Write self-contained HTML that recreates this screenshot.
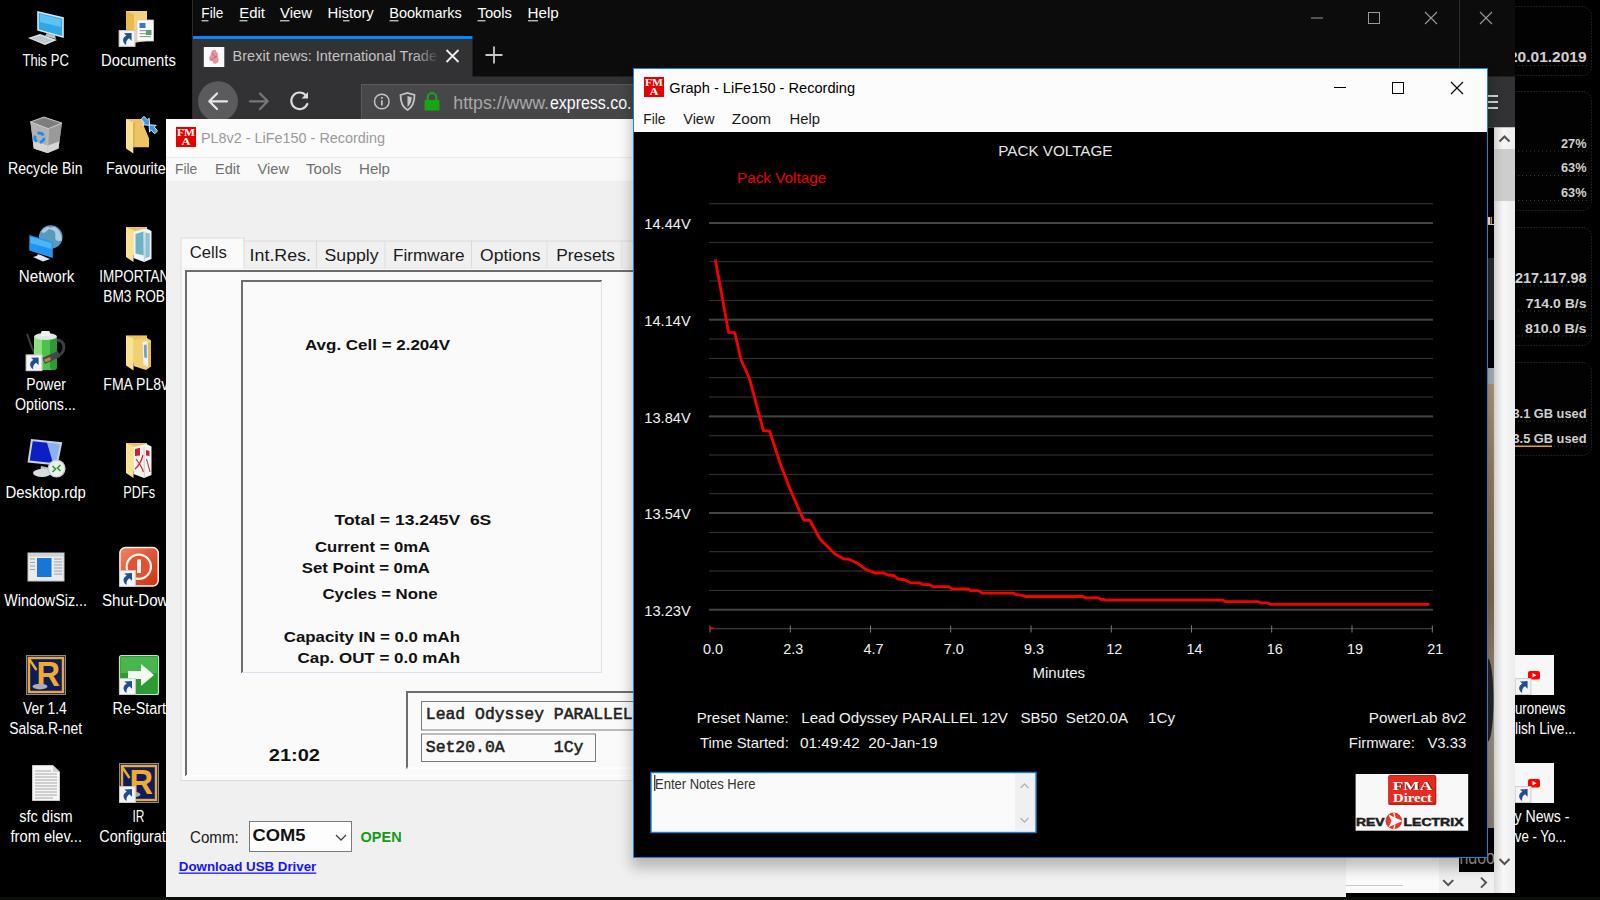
<!DOCTYPE html>
<html lang="en"><head><meta charset="utf-8"><title>Desktop - Graph - LiFe150 - Recording</title>
<style>
html,body{margin:0;padding:0;background:#000;overflow:hidden}
#screen{position:relative;width:1600px;height:900px;overflow:hidden;background:#000;font-family:"Liberation Sans",sans-serif}
svg text{white-space:pre}
</style></head><body><div id="screen">
<div id="desktop" style="position:absolute;left:0;top:0;width:1600px;height:900px;background:#000">
<svg width="1600" height="900" viewBox="0 0 1600 900" style="position:absolute;left:0;top:0;overflow:hidden" >
<g id="desktop-icons">
<g id="ico-thispc"><path d="M38 12 L63 18 L63 37 L38 30 Z" fill="#2fa8ea"/><path d="M38 12 L63 18 L63 37 L38 30 Z" fill="none" stroke="#d8e6f0" stroke-width="1.6"/><path d="M40 14 L61 19.5 L61 27 L40 22 Z" fill="#5cc4f5"/><path d="M47 33 L55 35 L56 39 L45 36 Z" fill="#b9c2c9"/><path d="M28 38 L40 34 L57 40 L45 45 Z" fill="#dfe4e8"/><path d="M30.5 38.3 L40.3 35.4 L53.5 40.2 L45 43.4 Z" fill="#c9cfd4"/><path d="M33 38.6 L41 36.3 M36 40 L44 37.5 M39.5 41.3 L47.5 38.8 M43 42.5 L51 40" stroke="#9aa2a9" stroke-width="0.8" stroke-dasharray="1.2 1"/></g>
<g id="ico-docs"><path d="M126 11 L147 11 L147 41 L126 44 Z" fill="#f3d27c"/><path d="M126 11 L134 14.5 L134 47 L126 43 Z" fill="#e9b84f"/><rect x="137" y="20" width="16.5" height="21" fill="#fdfdfd" stroke="#c9ced3" stroke-width="0.8"/><rect x="139.5" y="23" width="6" height="5" fill="#3b78c9"/><rect x="139.5" y="30" width="11.5" height="1.2" fill="#9aa3ab"/><rect x="139.5" y="33" width="11.5" height="1.2" fill="#9aa3ab"/><rect x="146" y="30" width="5.5" height="5" fill="#5da364"/><rect x="139.5" y="36" width="11.5" height="1.2" fill="#9aa3ab"/><g transform="translate(118.8,30.2) scale(1.03125)"><rect x="0" y="0" width="16" height="16" fill="#f4f4f4"/><rect x="0.4" y="0.4" width="15.2" height="15.2" fill="none" stroke="#c4c4c4" stroke-width="0.8"/><path d="M5 3 L12.4 2.7 L12.4 10.2 L9.9 7.8 C7.7 9.1 6.8 11.4 7.1 14.3 C3.2 11.6 3.2 7.1 7.4 5.3 Z" fill="#1e4f94"/></g></g>
<g id="ico-bin"><path d="M30.4 121.9 L43.9 117.1 L61.9 123.1 L58.5 148.4 L47.5 152.9 L33.8 148.4 Z" fill="#a4a4a4"/><path d="M30.4 121.9 L43.9 117.1 L61.9 123.1 L48.4 128.7 Z" fill="#7e7e7e"/><path d="M30.4 121.9 L48.4 128.7 L47.5 152.9 L33.8 148.4 Z" fill="#b2b2b2"/><path d="M48.4 128.7 L61.9 123.1 L58.5 148.4 L47.5 152.9 Z" fill="#9a9a9a"/><path d="M32.8 141 L47.8 145.5 L59.3 141.5 L58.5 148.4 L47.5 152.9 L33.8 148.4 Z" fill="#d6d6d6"/><path d="M30.4 121.9 L43.9 117.1 L61.9 123.1 L48.4 128.7 Z" fill="none" stroke="#d2d2d2" stroke-width="0.9"/><path d="M48.4 128.7 L47.5 152.9" stroke="#c6c6c6" stroke-width="0.8"/><circle cx="39.4" cy="137.7" r="4.6" fill="none" stroke="#1e8cf0" stroke-width="3" stroke-dasharray="6.6 3"/></g>
<g id="ico-fav"><path d="M126 119.1 L144 119.1 L144 126.4 L149 138.2 L149 147.3 L133.3 147.3 Z" fill="#ecc464"/><path d="M126 119.1 L133.3 122.5 L133.3 153.4 L126 148.4 Z" fill="#f9e195"/><path d="M133.3 122.5 L134.6 122.5 L134.6 147.3 L133.3 147.3 Z" fill="#d9a845"/><g stroke="#f4f8fc" stroke-width="0.9" fill="#3a96e8"><path d="M141.2 119.2 L144 116.3 L147.4 119.9 L149.2 118.2 L149.6 125.3 L142.6 124.8 L144.4 123 Z"/><path d="M157.5 130.9 L154.7 133.8 L151.3 130.2 L149.5 131.9 L149.1 124.8 L156.1 125.3 L154.3 127.1 Z"/></g></g>
<g id="ico-net"><circle cx="50.7" cy="237" r="11.8" fill="#5a98bd"/><path d="M46 228 C49 230 52 229 54 231 C57 234 54 237 56 240 C58 242 60 240 62 241 C62 236 60 230 55 227 Z" fill="#a9cfe0"/><path d="M41 232 C43 229 46 227 49 226.5 L48 230 L44 233 Z" fill="#a9cfe0"/><path d="M29.3 235 L52.8 242 L52.8 258 L29.3 250.5 Z" fill="#2196f0"/><path d="M30.5 236.8 L51.6 243 L51.6 249 L30.5 243 Z" fill="#4db4f8"/><path d="M38 254 L45 257 L46 260 L36 257 Z" fill="#c3cad0"/><path d="M33 257 L40 255 L50 259 L43 261.5 Z" fill="#e3e7ea"/></g>
<g id="ico-imp"><path d="M126 227 L147 227 L147 255 L126 255 Z" fill="#eec35f"/><path d="M126 227.5 L133.5 230 L133.5 262 L126 257 Z" fill="#f9e195"/><path d="M133.5 231.5 L146.5 228.5 L151.5 231 L151.5 259 L144 262 L133.5 258 Z" fill="#f1f4f6"/><path d="M135.5 234 L143.5 231.6 L143.8 255.5 L135.5 253.5 Z" fill="#6fb2c6"/><path d="M145.3 232.5 L149.8 233.6 L149.8 256.5 L145.3 258.5 Z" fill="#8cc3d2"/><path d="M144 231.5 L144.4 262" stroke="#c5cdd3" stroke-width="1"/></g>
<g id="ico-power"><path d="M27 334 C30 340 31 352 40 360" fill="none" stroke="#3a3d42" stroke-width="2"/><rect x="34" y="336" width="23" height="34" rx="4" fill="#4cc24a"/><rect x="34" y="336" width="8" height="34" rx="3" fill="#8be07f"/><rect x="50" y="336" width="7" height="34" rx="3" fill="#2f9a35"/><ellipse cx="45.5" cy="336.5" rx="11.5" ry="3.6" fill="#dfe7e2"/><rect x="41" y="331" width="9" height="5" rx="1.5" fill="#eef2ef"/><path d="M57 340 C66 341 66 352 58 356" fill="none" stroke="#3a3d42" stroke-width="3"/><path d="M42 358 L58 351 L60 357 L45 364 Z" fill="#44484e"/><path d="M44 359.5 L50 357 L51 360 L45.3 362.5 Z" fill="#b08a3e"/><g transform="translate(25.8,354.6) scale(1.03125)"><rect x="0" y="0" width="16" height="16" fill="#f4f4f4"/><rect x="0.4" y="0.4" width="15.2" height="15.2" fill="none" stroke="#c4c4c4" stroke-width="0.8"/><path d="M5 3 L12.4 2.7 L12.4 10.2 L9.9 7.8 C7.7 9.1 6.8 11.4 7.1 14.3 C3.2 11.6 3.2 7.1 7.4 5.3 Z" fill="#1e4f94"/></g></g>
<g id="ico-fma"><path d="M126 335.4 L147 335.4 L147 363.4 L126 363.4 Z" fill="#eec35f"/><path d="M126 335.9 L133.5 338.4 L133.5 370.4 L126 365.4 Z" fill="#f9e195"/><path d="M133.5 340 L147 338 L151 340.5 L151 366.5 L146 370 L133.5 366 Z" fill="#f3cf72"/><path d="M142.5 342 L147.3 341 L148.3 367 L143.5 364.5 Z" fill="#eef3f7"/><path d="M143.8 345 L146.6 344.6 L147 358 L144.2 357.5 Z" fill="#6aa3d8"/><path d="M148.3 343 L151 342 L151 366.5 L148.3 367 Z" fill="#e9b84f"/></g>
<g id="ico-rdp"><path d="M31 439 L62.3 442.3 L57.5 465.5 L27.5 462.5 Z" fill="#c9d0d8"/><path d="M32.8 441.2 L60 444 L56 463.3 L29.8 460.6 Z" fill="#8fb0ee"/><path d="M32.8 441.2 L47 442.7 L53 463 L29.8 460.6 Z" fill="#0c1fc4"/><path d="M41 466 L50 468 L51 473 L40 472 Z" fill="#b8c0c6"/><ellipse cx="42" cy="473" rx="9" ry="4" fill="#d9dde0"/><circle cx="56.6" cy="468.6" r="9" fill="#c9ced2"/><circle cx="56.6" cy="468.6" r="7.6" fill="#eceeec"/><path d="M52.5 466 L55.5 469 L52.5 472 M60.5 465 L57.5 468 L60.5 471" fill="none" stroke="#2f9e3b" stroke-width="1.7"/></g>
<g id="ico-pdf"><path d="M126 443 L147 443 L147 471 L126 471 Z" fill="#eec35f"/><path d="M126 443.5 L133.5 446 L133.5 478 L126 473 Z" fill="#f9e195"/><path d="M133.5 447 L146.5 444 L151.5 446.5 L151.5 475 L144 478 L133.5 474 Z" fill="#f4f4f4"/><path d="M135 449 L140 447.8 L140 455.5 L135 456 Z" fill="#c8242b"/><path d="M136 459 C139 463 142 467 143.5 472 M143 455 C141.5 461 138.5 466 135 469" stroke="#c8242b" stroke-width="1.2" fill="none"/><path d="M144 447 L144.4 478" stroke="#cfcfcf" stroke-width="1"/><path d="M146 450 L149.5 451 L149.5 456 L146 455.5 Z" fill="#c8242b"/><path d="M146.5 459 C148 464 149 468 150 472" stroke="#c8242b" stroke-width="1" fill="none"/></g>
<g id="ico-winsize"><rect x="28" y="553" width="36" height="28" fill="#e9ebed" stroke="#c2c6ca" stroke-width="1"/><rect x="28" y="553" width="36" height="3.5" fill="#cfd3d7"/><rect x="37" y="558" width="14.5" height="19" fill="#1976d9"/><path d="M30 559 h5 M30 562.5 h5 M30 566 h5 M30 569.5 h5 M54 559 h8 M54 562 h8 M54 565 h8 M54 568 h8 M54 571 h8 M54 574 h8" stroke="#9aa1a8" stroke-width="1"/></g>
<defs><linearGradient id="shutg" x1="0" x2="1" y1="0" y2="1"><stop offset="0" stop-color="#f0876a"/><stop offset="0.45" stop-color="#e2583a"/><stop offset="1" stop-color="#c4330f"/></linearGradient></defs>
<g id="ico-shut"><rect x="119.9" y="547.6" width="38.3" height="38.5" rx="5.5" fill="url(#shutg)" stroke="#fbf3f0" stroke-width="1.5"/><circle cx="138.8" cy="566.7" r="12.1" fill="#df5333" stroke="#fdf6f3" stroke-width="2.2"/><rect x="137.1" y="559.5" width="3.9" height="13.5" fill="#fdf6f3"/><g transform="translate(119.2,570.3) scale(1.03125)"><rect x="0" y="0" width="16" height="16" fill="#f4f4f4"/><rect x="0.4" y="0.4" width="15.2" height="15.2" fill="none" stroke="#c4c4c4" stroke-width="0.8"/><path d="M5 3 L12.4 2.7 L12.4 10.2 L9.9 7.8 C7.7 9.1 6.8 11.4 7.1 14.3 C3.2 11.6 3.2 7.1 7.4 5.3 Z" fill="#1e4f94"/></g></g>
<g id="ico-salsa" transform="translate(26,655)"><rect x="0.5" y="0.5" width="39" height="39" fill="#0f1c5c" stroke="#8d8a78" stroke-width="1"/><rect x="3" y="3" width="34" height="34" fill="none" stroke="#e9a93a" stroke-width="2.4"/><text x="10.5" y="31.2" font-family="'Liberation Sans', sans-serif" font-size="34.5" font-weight="bold" fill="#f0ac30" textLength="23.5" lengthAdjust="spacingAndGlyphs">R</text><path d="M2.5 3 L10.5 15" fill="none" stroke="#f0ac30" stroke-width="2.4"/><ellipse cx="14" cy="31.6" rx="7.5" ry="2.8" fill="#a9adb8"/></g>
<g id="ico-restart"><rect x="119.5" y="655.5" width="39" height="39" rx="2" fill="#2f9a35" stroke="#bfe3c0" stroke-width="1.2"/><rect x="121" y="657" width="36" height="16" fill="#49b64d"/><path d="M128 671 L141 671 L141 664 L154 675 L141 686 L141 679 L128 679 Z" fill="#f3faf3"/><g transform="translate(119.2,678.3) scale(1.03125)"><rect x="0" y="0" width="16" height="16" fill="#f4f4f4"/><rect x="0.4" y="0.4" width="15.2" height="15.2" fill="none" stroke="#c4c4c4" stroke-width="0.8"/><path d="M5 3 L12.4 2.7 L12.4 10.2 L9.9 7.8 C7.7 9.1 6.8 11.4 7.1 14.3 C3.2 11.6 3.2 7.1 7.4 5.3 Z" fill="#1e4f94"/></g></g>
<g id="ico-txt"><path d="M32.5 765.5 L53 765.5 L59.5 772 L59.5 800.5 L32.5 800.5 Z" fill="#f6f6f6" stroke="#c9c9c9" stroke-width="1"/><path d="M53 765.5 L53 772 L59.5 772 Z" fill="#d4d4d4"/><path d="M35 771 h16 M35 774 h22 M35 777 h22 M35 780 h22 M35 783 h22 M35 786 h22 M35 789 h22 M35 792 h22 M35 795 h22 M35 798 h18" stroke="#a8a8a8" stroke-width="1"/></g>
<g id="ico-ir" transform="translate(119,763)"><rect x="0.5" y="0.5" width="39" height="39" fill="#0f1c5c" stroke="#8d8a78" stroke-width="1"/><rect x="3" y="3" width="34" height="34" fill="none" stroke="#e9a93a" stroke-width="2.4"/><text x="10.5" y="31.2" font-family="'Liberation Sans', sans-serif" font-size="34.5" font-weight="bold" fill="#f0ac30" textLength="23.5" lengthAdjust="spacingAndGlyphs">R</text><path d="M2.5 3 L10.5 15" fill="none" stroke="#f0ac30" stroke-width="2.4"/><ellipse cx="14" cy="31.6" rx="7.5" ry="2.8" fill="#a9adb8"/></g>
<g transform="translate(119.2,786.3) scale(1.03125)"><rect x="0" y="0" width="16" height="16" fill="#f4f4f4"/><rect x="0.4" y="0.4" width="15.2" height="15.2" fill="none" stroke="#c4c4c4" stroke-width="0.8"/><path d="M5 3 L12.4 2.7 L12.4 10.2 L9.9 7.8 C7.7 9.1 6.8 11.4 7.1 14.3 C3.2 11.6 3.2 7.1 7.4 5.3 Z" fill="#1e4f94"/></g>
</g>
<g id="desktop-labels">
<text x="22.5" y="66" font-family="'Liberation Sans', sans-serif" font-size="16" fill="#ffffff" textLength="46.3" lengthAdjust="spacingAndGlyphs" xml:space="preserve" >This PC</text>
<text x="101" y="66" font-family="'Liberation Sans', sans-serif" font-size="16" fill="#ffffff" textLength="74.8" lengthAdjust="spacingAndGlyphs" xml:space="preserve" >Documents</text>
<text x="8" y="174" font-family="'Liberation Sans', sans-serif" font-size="16" fill="#ffffff" textLength="74.5" lengthAdjust="spacingAndGlyphs" xml:space="preserve" >Recycle Bin</text>
<text x="106" y="174" font-family="'Liberation Sans', sans-serif" font-size="16" fill="#ffffff" textLength="66.8" lengthAdjust="spacingAndGlyphs" xml:space="preserve" >Favourites</text>
<text x="18.8" y="282" font-family="'Liberation Sans', sans-serif" font-size="16" fill="#ffffff" textLength="55.5" lengthAdjust="spacingAndGlyphs" xml:space="preserve" >Network</text>
<text x="99.3" y="282" font-family="'Liberation Sans', sans-serif" font-size="16" fill="#ffffff" textLength="78.2" lengthAdjust="spacingAndGlyphs" xml:space="preserve" >IMPORTANT</text>
<text x="103.3" y="302" font-family="'Liberation Sans', sans-serif" font-size="16" fill="#ffffff" textLength="61.7" lengthAdjust="spacingAndGlyphs" xml:space="preserve" >BM3 ROB</text>
<text x="26.3" y="390" font-family="'Liberation Sans', sans-serif" font-size="16" fill="#ffffff" textLength="39.5" lengthAdjust="spacingAndGlyphs" xml:space="preserve" >Power</text>
<text x="15" y="410" font-family="'Liberation Sans', sans-serif" font-size="16" fill="#ffffff" textLength="60.8" lengthAdjust="spacingAndGlyphs" xml:space="preserve" >Options...</text>
<text x="103.3" y="390" font-family="'Liberation Sans', sans-serif" font-size="16" fill="#ffffff" textLength="72.7" lengthAdjust="spacingAndGlyphs" xml:space="preserve" >FMA PL8v2</text>
<text x="5.5" y="498" font-family="'Liberation Sans', sans-serif" font-size="16" fill="#ffffff" textLength="80.3" lengthAdjust="spacingAndGlyphs" xml:space="preserve" >Desktop.rdp</text>
<text x="123.3" y="498" font-family="'Liberation Sans', sans-serif" font-size="16" fill="#ffffff" textLength="31.7" lengthAdjust="spacingAndGlyphs" xml:space="preserve" >PDFs</text>
<text x="4.3" y="606" font-family="'Liberation Sans', sans-serif" font-size="16" fill="#ffffff" textLength="82.7" lengthAdjust="spacingAndGlyphs" xml:space="preserve" >WindowSiz...</text>
<text x="102" y="606" font-family="'Liberation Sans', sans-serif" font-size="16" fill="#ffffff" textLength="75" lengthAdjust="spacingAndGlyphs" xml:space="preserve" >Shut-Down</text>
<text x="23" y="714" font-family="'Liberation Sans', sans-serif" font-size="16" fill="#ffffff" textLength="43.8" lengthAdjust="spacingAndGlyphs" xml:space="preserve" >Ver 1.4</text>
<text x="9.3" y="734" font-family="'Liberation Sans', sans-serif" font-size="16" fill="#ffffff" textLength="72.7" lengthAdjust="spacingAndGlyphs" xml:space="preserve" >Salsa.R-net</text>
<text x="112.5" y="714" font-family="'Liberation Sans', sans-serif" font-size="16" fill="#ffffff" textLength="53.5" lengthAdjust="spacingAndGlyphs" xml:space="preserve" >Re-Start</text>
<text x="19.3" y="822" font-family="'Liberation Sans', sans-serif" font-size="16" fill="#ffffff" textLength="53.2" lengthAdjust="spacingAndGlyphs" xml:space="preserve" >sfc dism</text>
<text x="10.5" y="842" font-family="'Liberation Sans', sans-serif" font-size="16" fill="#ffffff" textLength="71.5" lengthAdjust="spacingAndGlyphs" xml:space="preserve" >from elev...</text>
<text x="132.5" y="822" font-family="'Liberation Sans', sans-serif" font-size="16" fill="#ffffff" textLength="12.0" lengthAdjust="spacingAndGlyphs" xml:space="preserve" >IR</text>
<text x="99.3" y="842" font-family="'Liberation Sans', sans-serif" font-size="16" fill="#ffffff" textLength="81.7" lengthAdjust="spacingAndGlyphs" xml:space="preserve" >Configurati...</text>
</g>
<g id="gadgets">
<rect x="1500.5" y="6.5" width="91" height="69" rx="9" fill="#020202" stroke="#3a3a3a" stroke-width="1" stroke-dasharray="1 2"/>
<rect x="1500.5" y="91.5" width="91" height="119" rx="9" fill="#020202" stroke="#3a3a3a" stroke-width="1" stroke-dasharray="1 2"/>
<rect x="1500.5" y="227.5" width="91" height="118" rx="9" fill="#020202" stroke="#3a3a3a" stroke-width="1" stroke-dasharray="1 2"/>
<rect x="1500.5" y="362.5" width="91" height="93" rx="9" fill="#020202" stroke="#3a3a3a" stroke-width="1" stroke-dasharray="1 2"/>
<text x="1509" y="62" font-family="'Liberation Sans', sans-serif" font-size="14" fill="#cfcfcf" font-weight="bold" textLength="77.5" lengthAdjust="spacingAndGlyphs" xml:space="preserve" >20.01.2019</text>
<line x1="1518" y1="65.5" x2="1588" y2="65.5" stroke="#3a3a3a" stroke-width="1" stroke-dasharray="1 3"/>
<text x="1561" y="147.5" font-family="'Liberation Sans', sans-serif" font-size="13.5" fill="#cfcfcf" font-weight="bold" textLength="25.5" lengthAdjust="spacingAndGlyphs" xml:space="preserve" >27%</text>
<line x1="1518" y1="151.0" x2="1588" y2="151.0" stroke="#3a3a3a" stroke-width="1" stroke-dasharray="1 3"/>
<text x="1561" y="172" font-family="'Liberation Sans', sans-serif" font-size="13.5" fill="#cfcfcf" font-weight="bold" textLength="25.5" lengthAdjust="spacingAndGlyphs" xml:space="preserve" >63%</text>
<line x1="1518" y1="175.5" x2="1588" y2="175.5" stroke="#3a3a3a" stroke-width="1" stroke-dasharray="1 3"/>
<text x="1561" y="197" font-family="'Liberation Sans', sans-serif" font-size="13.5" fill="#cfcfcf" font-weight="bold" textLength="25.5" lengthAdjust="spacingAndGlyphs" xml:space="preserve" >63%</text>
<line x1="1518" y1="200.5" x2="1588" y2="200.5" stroke="#3a3a3a" stroke-width="1" stroke-dasharray="1 3"/>
<text x="1511" y="282.5" font-family="'Liberation Sans', sans-serif" font-size="14" fill="#cfcfcf" font-weight="bold" textLength="75.5" lengthAdjust="spacingAndGlyphs" xml:space="preserve" >.217.117.98</text>
<line x1="1518" y1="286.0" x2="1588" y2="286.0" stroke="#3a3a3a" stroke-width="1" stroke-dasharray="1 3"/>
<text x="1525.8" y="307.5" font-family="'Liberation Sans', sans-serif" font-size="13.5" fill="#cfcfcf" font-weight="bold" textLength="60.7" lengthAdjust="spacingAndGlyphs" xml:space="preserve" >714.0 B/s</text>
<line x1="1518" y1="311.0" x2="1588" y2="311.0" stroke="#3a3a3a" stroke-width="1" stroke-dasharray="1 3"/>
<text x="1525" y="332.5" font-family="'Liberation Sans', sans-serif" font-size="13.5" fill="#cfcfcf" font-weight="bold" textLength="61.5" lengthAdjust="spacingAndGlyphs" xml:space="preserve" >810.0 B/s</text>
<line x1="1518" y1="336.0" x2="1588" y2="336.0" stroke="#3a3a3a" stroke-width="1" stroke-dasharray="1 3"/>
<text x="1512.5" y="417.5" font-family="'Liberation Sans', sans-serif" font-size="13.5" fill="#cfcfcf" font-weight="bold" textLength="74.0" lengthAdjust="spacingAndGlyphs" xml:space="preserve" >3.1 GB used</text>
<line x1="1518" y1="421.0" x2="1588" y2="421.0" stroke="#3a3a3a" stroke-width="1" stroke-dasharray="1 3"/>
<text x="1512.5" y="442.5" font-family="'Liberation Sans', sans-serif" font-size="13.5" fill="#cfcfcf" font-weight="bold" textLength="74.0" lengthAdjust="spacingAndGlyphs" xml:space="preserve" >3.5 GB used</text>
<line x1="1518" y1="446.0" x2="1588" y2="446.0" stroke="#3a3a3a" stroke-width="1" stroke-dasharray="1 3"/>
<rect x="1515" y="445.5" width="37" height="1.5" fill="#e8a020" />
</g>
<g id="right-icons">
<rect x="1500" y="655" width="54" height="40" fill="#f7f7f7" />
<rect x="1528" y="671" width="12" height="8.5" rx="2" fill="#f00"/>
<path d="M1532.5 673 L1536.5 675.2 L1532.5 677.4 Z" fill="#fff"/>
<g transform="translate(1514.8,678.3) scale(1.03125)"><rect x="0" y="0" width="16" height="16" fill="#f4f4f4"/><rect x="0.4" y="0.4" width="15.2" height="15.2" fill="none" stroke="#c4c4c4" stroke-width="0.8"/><path d="M5 3 L12.4 2.7 L12.4 10.2 L9.9 7.8 C7.7 9.1 6.8 11.4 7.1 14.3 C3.2 11.6 3.2 7.1 7.4 5.3 Z" fill="#1e4f94"/></g>
<rect x="1500" y="763" width="54" height="40" fill="#f7f7f7" />
<rect x="1528" y="779" width="12" height="8.5" rx="2" fill="#f00"/>
<path d="M1532.5 781 L1536.5 783.2 L1532.5 785.4 Z" fill="#fff"/>
<g transform="translate(1514.8,786.3) scale(1.03125)"><rect x="0" y="0" width="16" height="16" fill="#f4f4f4"/><rect x="0.4" y="0.4" width="15.2" height="15.2" fill="none" stroke="#c4c4c4" stroke-width="0.8"/><path d="M5 3 L12.4 2.7 L12.4 10.2 L9.9 7.8 C7.7 9.1 6.8 11.4 7.1 14.3 C3.2 11.6 3.2 7.1 7.4 5.3 Z" fill="#1e4f94"/></g>
<text x="1506" y="714" font-family="'Liberation Sans', sans-serif" font-size="16" fill="#fff" textLength="59.3" lengthAdjust="spacingAndGlyphs" xml:space="preserve" >Euronews</text>
<text x="1490.5" y="734" font-family="'Liberation Sans', sans-serif" font-size="16" fill="#fff" textLength="85.3" lengthAdjust="spacingAndGlyphs" xml:space="preserve" >English Live...</text>
<text x="1498" y="822" font-family="'Liberation Sans', sans-serif" font-size="16" fill="#fff" textLength="71.5" lengthAdjust="spacingAndGlyphs" xml:space="preserve" >Sky News -</text>
<text x="1504.5" y="842" font-family="'Liberation Sans', sans-serif" font-size="16" fill="#fff" textLength="61.8" lengthAdjust="spacingAndGlyphs" xml:space="preserve" >Live - Yo...</text>
</g>
</svg>
</div>
<div id="firefox" style="position:absolute;left:0;top:0;width:1600px;height:900px">
<svg width="1600" height="900" viewBox="0 0 1600 900" style="position:absolute;left:0;top:0;overflow:hidden" >
<rect x="193" y="0" width="1322" height="893" fill="#0c0c0d" />
<rect x="192" y="0" width="1" height="893" fill="#2b2b2b" />
<rect x="193" y="39" width="279.5" height="38" fill="#323234" />
<rect x="193" y="36" width="279.5" height="3" fill="#0a84ff" />
<rect x="193" y="76.5" width="1322" height="51" fill="#323234" />
<rect x="361" y="84" width="1000" height="36" fill="#474749" />
<rect x="361" y="84" width="1000" height="1" fill="#5a5a5c" />
<rect x="361" y="84" width="1" height="36" fill="#5a5a5c" />
<text x="201.3" y="18" font-family="'Liberation Sans', sans-serif" font-size="15" fill="#ffffff" textLength="22.0" lengthAdjust="spacingAndGlyphs" xml:space="preserve" >File</text>
<text x="239.3" y="18" font-family="'Liberation Sans', sans-serif" font-size="15" fill="#ffffff" textLength="25.7" lengthAdjust="spacingAndGlyphs" xml:space="preserve" >Edit</text>
<text x="280" y="18" font-family="'Liberation Sans', sans-serif" font-size="15" fill="#ffffff" textLength="32" lengthAdjust="spacingAndGlyphs" xml:space="preserve" >View</text>
<text x="327.5" y="18" font-family="'Liberation Sans', sans-serif" font-size="15" fill="#ffffff" textLength="46.3" lengthAdjust="spacingAndGlyphs" xml:space="preserve" >History</text>
<text x="389.3" y="18" font-family="'Liberation Sans', sans-serif" font-size="15" fill="#ffffff" textLength="72.5" lengthAdjust="spacingAndGlyphs" xml:space="preserve" >Bookmarks</text>
<text x="477.5" y="18" font-family="'Liberation Sans', sans-serif" font-size="15" fill="#ffffff" textLength="34.5" lengthAdjust="spacingAndGlyphs" xml:space="preserve" >Tools</text>
<text x="527.5" y="18" font-family="'Liberation Sans', sans-serif" font-size="15" fill="#ffffff" textLength="31.3" lengthAdjust="spacingAndGlyphs" xml:space="preserve" >Help</text>
<rect x="201.5" y="20.3" width="7.0" height="1" fill="#ffffff" />
<rect x="239.5" y="20.3" width="8.0" height="1" fill="#ffffff" />
<rect x="280" y="20.3" width="9.5" height="1" fill="#ffffff" />
<rect x="343" y="20.3" width="6.5" height="1" fill="#ffffff" />
<rect x="389.5" y="20.3" width="9.0" height="1" fill="#ffffff" />
<rect x="477.5" y="20.3" width="8.0" height="1" fill="#ffffff" />
<rect x="528" y="20.3" width="10" height="1" fill="#ffffff" />
<rect x="1311" y="17.5" width="12" height="1" fill="#9a9a9a" />
<rect x="1368.5" y="12.5" width="11" height="11" fill="none" stroke="#9a9a9a" stroke-width="1"/>
<path d="M1425 12 L1437 24 M1437 12 L1425 24" stroke="#9a9a9a" stroke-width="1.1" fill="none"/>
<path d="M1480 12 L1492 24 M1492 12 L1480 24" stroke="#9a9a9a" stroke-width="1.1" fill="none"/>
<rect x="1459" y="0" width="1" height="69" fill="#2e2e2e" />
<rect x="203.8" y="47" width="20.5" height="20" fill="#fafafa" />
<path d="M213 50 C210 52 212 54 210 56 C208 59 210 62 213 61 C212 64 216 65 218 62 C220 60 217 57 218 54 C218 52 215 52 216 50 Z" fill="#e0808c" opacity="0.85"/>
<path d="M212 53 L216 58 M211 60 L217 56" stroke="#c8485a" stroke-width="0.8" opacity="0.8"/>
<defs><linearGradient id="tabfade" x1="0" x2="1" y1="0" y2="0"><stop offset="0" stop-color="#323234" stop-opacity="0"/><stop offset="1" stop-color="#323234" stop-opacity="1"/></linearGradient></defs>
<text x="232.5" y="61.3" font-family="'Liberation Sans', sans-serif" font-size="15" fill="#c2c2c2" textLength="204.5" lengthAdjust="spacingAndGlyphs" xml:space="preserve" >Brexit news: International Trade</text>
<rect x="414" y="42" width="26" height="32" fill="url(#tabfade)" />
<path d="M446.5 50 L458.5 62 M458.5 50 L446.5 62" stroke="#f0f0f0" stroke-width="1.8" fill="none"/>
<path d="M485.5 55 H502.5 M494 46.5 V63.5" stroke="#c8c8c8" stroke-width="1.8" fill="none"/>
<circle cx="218" cy="101.3" r="20" fill="#5b5b5d"/>
<path d="M227 101.3 H210 M217 93.5 L209.3 101.3 L217 109" stroke="#e6e6e6" stroke-width="2.2" fill="none" stroke-linecap="round" stroke-linejoin="round"/>
<path d="M250 101.3 H267 M260 93.5 L267.7 101.3 L260 109" stroke="#77777a" stroke-width="2.2" fill="none" stroke-linecap="round" stroke-linejoin="round"/>
<path d="M306 95.5 A8.3 8.3 0 1 0 307.3 104" stroke="#dcdcdc" stroke-width="2.2" fill="none" stroke-linecap="round"/>
<path d="M308 92 L308 98.5 L301.5 98.5 Z" fill="#dcdcdc"/>
<circle cx="381.8" cy="101.5" r="7.3" fill="none" stroke="#c4c4c6" stroke-width="1.5"/>
<rect x="381" y="100.3" width="1.7" height="5.2" fill="#c4c4c6" />
<rect x="381" y="97" width="1.7" height="1.8" fill="#c4c4c6" />
<path d="M400.5 95 L407.5 93 L414.5 95 C414.5 103 412 107.5 407.5 110 C403 107.5 400.5 103 400.5 95 Z" fill="none" stroke="#c4c4c6" stroke-width="1.8"/>
<path d="M407.5 96 L411.8 97.3 C411.6 102 410 105 407.5 107 Z" fill="#c4c4c6"/>
<rect x="424.5" y="100" width="15" height="10.5" rx="1.5" fill="#16a516"/>
<path d="M427.7 100 V97.5 A4.3 4.3 0 0 1 436.3 97.5 V100" fill="none" stroke="#16a516" stroke-width="2.2"/>
<text x="453.3" y="109.3" font-family="'Liberation Sans', sans-serif" font-size="17.5" fill="#a8a8aa" textLength="95.7" lengthAdjust="spacingAndGlyphs" xml:space="preserve" >https://www.</text>
<text x="550" y="109.3" font-family="'Liberation Sans', sans-serif" font-size="17.5" fill="#fafafa" textLength="81.5" lengthAdjust="spacingAndGlyphs" xml:space="preserve" >express.co.</text>
<text x="632" y="109.3" font-family="'Liberation Sans', sans-serif" font-size="17.5" fill="#a8a8aa" xml:space="preserve" >uk/news/politics</text>
<rect x="1487" y="95" width="11" height="2" fill="#d4d4d4" />
<rect x="1487" y="101" width="11" height="2" fill="#d4d4d4" />
<rect x="1487" y="107" width="11" height="2" fill="#d4d4d4" />
<rect x="193" y="127.5" width="1322" height="765.5" fill="#fafafa" />
<rect x="1459" y="127.5" width="35" height="745" fill="#000" />
<rect x="1488" y="258" width="6" height="62" fill="#2a2a2a" />
<rect x="1488" y="217" width="2" height="7" fill="#f0f0f0" />
<rect x="1490.5" y="217" width="1.5" height="7" fill="#e8a020" />
<rect x="1488" y="224" width="6" height="1" fill="#ddd" />
<defs><linearGradient id="strip" x1="0" x2="0" y1="0" y2="1"><stop offset="0" stop-color="#b89c7c"/><stop offset="0.25" stop-color="#9c7c5a"/><stop offset="0.5" stop-color="#86684a"/><stop offset="0.75" stop-color="#a39480"/><stop offset="1" stop-color="#8f8474"/></linearGradient><linearGradient id="sbtrack" x1="0" x2="1" y1="0" y2="0"><stop offset="0" stop-color="#dedede"/><stop offset="0.45" stop-color="#f7f7f7"/><stop offset="1" stop-color="#ececec"/></linearGradient></defs>
<rect x="1488" y="368" width="6" height="460" fill="url(#strip)" />
<rect x="1488" y="368" width="6" height="16" fill="#a9b4bc" />
<ellipse cx="1487.5" cy="700" rx="6" ry="42" fill="#262626"/>
<text x="1459.5" y="864" font-family="'Liberation Sans', sans-serif" font-size="21" fill="#a09a94" textLength="35.5" lengthAdjust="spacingAndGlyphs" xml:space="preserve" >ndoo</text>
<rect x="1494" y="127.5" width="21" height="765.5" fill="url(#sbtrack)" />
<rect x="1494" y="149" width="21" height="52" fill="#cdcdcd" />
<path d="M1499.5 141.5 L1504.5 136.5 L1509.5 141.5" fill="none" stroke="#505050" stroke-width="2"/>
<path d="M1499.5 859.0 L1504.5 864.0 L1509.5 859.0" fill="none" stroke="#505050" stroke-width="2"/>
<rect x="1459" y="872" width="35" height="21" fill="#f0f0f0" />
<path d="M1481.0 877.6 L1486.0 882.6 L1481.0 887.6" fill="none" stroke="#505050" stroke-width="2"/>
<rect x="1439" y="858" width="20" height="35" fill="#f0f0f0" />
<path d="M1443.2 880.1 L1448.2 885.1 L1453.2 880.1" fill="none" stroke="#505050" stroke-width="2"/>
<rect x="1346" y="885" width="57" height="1" fill="#c8c8c8" />
</svg>
</div>
<div id="pl8v2" style="position:absolute;left:0;top:0;width:1600px;height:900px">
<svg width="1600" height="900" viewBox="0 0 1600 900" style="position:absolute;left:0;top:0;overflow:hidden" >
<rect x="166" y="119" width="1180" height="778" fill="#f0f0f0" />
<rect x="166" y="119" width="1180" height="38.5" fill="#fbfbfb" />
<rect x="166" y="157.5" width="1180" height="23" fill="#f9f9f9" />
<rect x="166" y="157" width="1180" height="1" fill="#ececec" />
<g transform="translate(176,127) scale(1.0)"><rect x="0" y="0" width="20" height="20" fill="#e60000"/><text x="1" y="9" font-family="'Liberation Serif', serif" font-size="10.5" font-weight="bold" fill="#fff" textLength="18" lengthAdjust="spacingAndGlyphs">FM</text><text x="5.5" y="18.3" font-family="'Liberation Serif', serif" font-size="10.5" font-weight="bold" fill="#fff" textLength="9" lengthAdjust="spacingAndGlyphs">A</text></g>
<text x="201" y="143.2" font-family="'Liberation Sans', sans-serif" font-size="14.8" fill="#9a9a9a" textLength="184" lengthAdjust="spacingAndGlyphs" xml:space="preserve" >PL8v2 - LiFe150 - Recording</text>
<text x="175" y="174.1" font-family="'Liberation Sans', sans-serif" font-size="15" fill="#707070" textLength="22.3" lengthAdjust="spacingAndGlyphs" xml:space="preserve" >File</text>
<text x="215" y="174.1" font-family="'Liberation Sans', sans-serif" font-size="15" fill="#707070" textLength="25" lengthAdjust="spacingAndGlyphs" xml:space="preserve" >Edit</text>
<text x="257.5" y="174.1" font-family="'Liberation Sans', sans-serif" font-size="15" fill="#707070" textLength="31.5" lengthAdjust="spacingAndGlyphs" xml:space="preserve" >View</text>
<text x="306" y="174.1" font-family="'Liberation Sans', sans-serif" font-size="15" fill="#707070" textLength="35.3" lengthAdjust="spacingAndGlyphs" xml:space="preserve" >Tools</text>
<text x="359" y="174.1" font-family="'Liberation Sans', sans-serif" font-size="15" fill="#707070" textLength="31" lengthAdjust="spacingAndGlyphs" xml:space="preserve" >Help</text>
<rect x="180.5" y="267.5" width="1166" height="513" fill="#fafafa" />
<rect x="180.5" y="267.5" width="1166" height="1" fill="#dcdcdc" />
<rect x="180.5" y="267.5" width="1" height="513" fill="#dcdcdc" />
<rect x="180.5" y="780" width="1166" height="1" fill="#dcdcdc" />
<rect x="244" y="240.5" width="73" height="27" fill="#f0f0f0" />
<rect x="244" y="240.5" width="73" height="1" fill="#d9d9d9" />
<rect x="316" y="240.5" width="1" height="27" fill="#d9d9d9" />
<text x="249.6" y="260.6" font-family="'Liberation Sans', sans-serif" font-size="16.5" fill="#1a1a1a" textLength="61.4" lengthAdjust="spacingAndGlyphs" xml:space="preserve" >Int.Res.</text>
<rect x="317" y="240.5" width="68.5" height="27" fill="#f0f0f0" />
<rect x="317" y="240.5" width="68.5" height="1" fill="#d9d9d9" />
<rect x="384.5" y="240.5" width="1" height="27" fill="#d9d9d9" />
<text x="324.6" y="260.6" font-family="'Liberation Sans', sans-serif" font-size="16.5" fill="#1a1a1a" textLength="53.9" lengthAdjust="spacingAndGlyphs" xml:space="preserve" >Supply</text>
<rect x="385.5" y="240.5" width="86.5" height="27" fill="#f0f0f0" />
<rect x="385.5" y="240.5" width="86.5" height="1" fill="#d9d9d9" />
<rect x="471" y="240.5" width="1" height="27" fill="#d9d9d9" />
<text x="393" y="260.6" font-family="'Liberation Sans', sans-serif" font-size="16.5" fill="#1a1a1a" textLength="71.5" lengthAdjust="spacingAndGlyphs" xml:space="preserve" >Firmware</text>
<rect x="472" y="240.5" width="75.5" height="27" fill="#f0f0f0" />
<rect x="472" y="240.5" width="75.5" height="1" fill="#d9d9d9" />
<rect x="546.5" y="240.5" width="1" height="27" fill="#d9d9d9" />
<text x="480" y="260.6" font-family="'Liberation Sans', sans-serif" font-size="16.5" fill="#1a1a1a" textLength="60.5" lengthAdjust="spacingAndGlyphs" xml:space="preserve" >Options</text>
<rect x="547.5" y="240.5" width="75.0" height="27" fill="#f0f0f0" />
<rect x="547.5" y="240.5" width="75.0" height="1" fill="#d9d9d9" />
<rect x="621.5" y="240.5" width="1" height="27" fill="#d9d9d9" />
<text x="556.3" y="260.6" font-family="'Liberation Sans', sans-serif" font-size="16.5" fill="#1a1a1a" textLength="58.7" lengthAdjust="spacingAndGlyphs" xml:space="preserve" >Presets</text>
<rect x="622.5" y="240.5" width="77.5" height="27" fill="#f0f0f0" />
<rect x="622.5" y="240.5" width="77.5" height="1" fill="#d9d9d9" />
<rect x="699" y="240.5" width="1" height="27" fill="#d9d9d9" />
<rect x="180.5" y="237.5" width="63.5" height="31" fill="#fafafa" />
<rect x="180.5" y="237.5" width="63.5" height="1" fill="#d9d9d9" />
<rect x="180.5" y="237.5" width="1" height="31" fill="#d9d9d9" />
<rect x="243.5" y="237.5" width="1" height="30" fill="#d9d9d9" />
<text x="189.8" y="257.8" font-family="'Liberation Sans', sans-serif" font-size="16.5" fill="#1a1a1a" textLength="37.0" lengthAdjust="spacingAndGlyphs" xml:space="preserve" >Cells</text>
<rect x="185" y="270" width="1161" height="506" fill="#fafafa" /><rect x="185" y="270" width="1161" height="2" fill="#6d6d6d" /><rect x="185" y="270" width="2" height="506" fill="#6d6d6d" /><rect x="1345" y="271" width="1" height="505" fill="#ffffff" /><rect x="186" y="775" width="1160" height="1" fill="#ffffff" />
<rect x="241" y="280" width="361" height="393" fill="#fafafa" /><rect x="241" y="280" width="361" height="2" fill="#6d6d6d" /><rect x="241" y="280" width="2" height="393" fill="#6d6d6d" /><rect x="601" y="281" width="1" height="392" fill="#e6dcf0" /><rect x="242" y="672" width="360" height="1" fill="#e6dcf0" />
<text x="305" y="350" font-family="'Liberation Sans', sans-serif" font-size="14.5" fill="#111" font-weight="bold" textLength="145" lengthAdjust="spacingAndGlyphs" xml:space="preserve" >Avg. Cell = 2.204V</text>
<text x="334.5" y="525.3" font-family="'Liberation Sans', sans-serif" font-size="14.5" fill="#111" font-weight="bold" textLength="156.8" lengthAdjust="spacingAndGlyphs" xml:space="preserve" >Total = 13.245V  6S</text>
<text x="315" y="552" font-family="'Liberation Sans', sans-serif" font-size="14.5" fill="#111" font-weight="bold" textLength="115" lengthAdjust="spacingAndGlyphs" xml:space="preserve" >Current = 0mA</text>
<text x="301.8" y="572.5" font-family="'Liberation Sans', sans-serif" font-size="14.5" fill="#111" font-weight="bold" textLength="128.2" lengthAdjust="spacingAndGlyphs" xml:space="preserve" >Set Point = 0mA</text>
<text x="322.5" y="599.2" font-family="'Liberation Sans', sans-serif" font-size="14.5" fill="#111" font-weight="bold" textLength="115.0" lengthAdjust="spacingAndGlyphs" xml:space="preserve" >Cycles = None</text>
<text x="283.8" y="642" font-family="'Liberation Sans', sans-serif" font-size="14.5" fill="#111" font-weight="bold" textLength="176.2" lengthAdjust="spacingAndGlyphs" xml:space="preserve" >Capacity IN = 0.0 mAh</text>
<text x="297.5" y="662.5" font-family="'Liberation Sans', sans-serif" font-size="14.5" fill="#111" font-weight="bold" textLength="162.5" lengthAdjust="spacingAndGlyphs" xml:space="preserve" >Cap. OUT = 0.0 mAh</text>
<text x="268.8" y="761.3" font-family="'Liberation Sans', sans-serif" font-size="16.5" fill="#111" font-weight="bold" textLength="51.2" lengthAdjust="spacingAndGlyphs" xml:space="preserve" >21:02</text>
<rect x="406" y="691" width="940" height="77.5" fill="#fafafa" /><rect x="406" y="691" width="940" height="2" fill="#6d6d6d" /><rect x="406" y="691" width="2" height="77.5" fill="#6d6d6d" /><rect x="1345" y="692" width="1" height="76.5" fill="#ffffff" /><rect x="407" y="767.5" width="939" height="1" fill="#ffffff" />
<rect x="421.5" y="701.5" width="900" height="28.5" fill="#fafafa" stroke="#7a7a7a" stroke-width="1"/>
<rect x="421.5" y="734" width="174" height="27.5" fill="#fafafa" stroke="#7a7a7a" stroke-width="1"/>
<text x="425.8" y="719.3" font-family="'Liberation Mono', monospace" font-size="16.4" fill="#222" textLength="246.25" lengthAdjust="spacingAndGlyphs" xml:space="preserve" stroke="#222" stroke-width="0.55">Lead Odyssey PARALLEL 12V</text>
<text x="425.8" y="751.7" font-family="'Liberation Mono', monospace" font-size="16.4" fill="#222" textLength="157.6" lengthAdjust="spacingAndGlyphs" xml:space="preserve" stroke="#222" stroke-width="0.55">Set20.0A     1Cy</text>
<text x="190" y="842.5" font-family="'Liberation Sans', sans-serif" font-size="16" fill="#1a1a1a" textLength="48.8" lengthAdjust="spacingAndGlyphs" xml:space="preserve" >Comm:</text>
<rect x="249.5" y="821.5" width="102" height="30" fill="#fdfdfd" stroke="#7a7a7a" stroke-width="1"/>
<text x="252.5" y="841.3" font-family="'Liberation Sans', sans-serif" font-size="16.5" fill="#111" font-weight="bold" textLength="53.0" lengthAdjust="spacingAndGlyphs" xml:space="preserve" >COM5</text>
<path d="M336 835 L341 840 L346 835" fill="none" stroke="#444" stroke-width="1.3"/>
<text x="360.5" y="842" font-family="'Liberation Sans', sans-serif" font-size="14.5" fill="#169a16" font-weight="bold" textLength="41.1" lengthAdjust="spacingAndGlyphs" xml:space="preserve" >OPEN</text>
<text x="178.8" y="870.8" font-family="'Liberation Sans', sans-serif" font-size="13" fill="#1414ff" font-weight="bold" textLength="137.5" lengthAdjust="spacingAndGlyphs" xml:space="preserve" >Download USB Driver</text>
<rect x="178.8" y="872.5" width="137.5" height="1.3" fill="#1414ff" />
</svg>
</div>
<div id="graphwin" style="position:absolute;left:0;top:0;width:1600px;height:900px">
<svg width="1600" height="900" viewBox="0 0 1600 900" style="position:absolute;left:0;top:0;overflow:hidden" >
<defs><filter id="sh" x="-5%" y="-5%" width="110%" height="110%"><feGaussianBlur stdDeviation="7"/></filter></defs>
<rect x="631" y="74" width="859" height="794" fill="#000" opacity="0.24" filter="url(#sh)"/>
<rect x="633" y="68" width="855" height="790" fill="#1883d7" />
<rect x="634" y="69" width="853" height="63" fill="#fcfcfc" />
<rect x="634" y="132" width="853" height="725" fill="#000" />
<g transform="translate(644,77) scale(1.0)"><rect x="0" y="0" width="20" height="20" fill="#e60000"/><text x="1" y="9" font-family="'Liberation Serif', serif" font-size="10.5" font-weight="bold" fill="#fff" textLength="18" lengthAdjust="spacingAndGlyphs">FM</text><text x="5.5" y="18.3" font-family="'Liberation Serif', serif" font-size="10.5" font-weight="bold" fill="#fff" textLength="9" lengthAdjust="spacingAndGlyphs">A</text></g>
<text x="669.3" y="93" font-family="'Liberation Sans', sans-serif" font-size="15.4" fill="#000" textLength="185.7" lengthAdjust="spacingAndGlyphs" xml:space="preserve" >Graph - LiFe150 - Recording</text>
<text x="643.3" y="124" font-family="'Liberation Sans', sans-serif" font-size="15" fill="#1a1a1a" textLength="22.2" lengthAdjust="spacingAndGlyphs" xml:space="preserve" >File</text>
<text x="683.2" y="124" font-family="'Liberation Sans', sans-serif" font-size="15" fill="#1a1a1a" textLength="31.3" lengthAdjust="spacingAndGlyphs" xml:space="preserve" >View</text>
<text x="731.8" y="124" font-family="'Liberation Sans', sans-serif" font-size="15" fill="#1a1a1a" textLength="39.2" lengthAdjust="spacingAndGlyphs" xml:space="preserve" >Zoom</text>
<text x="789.5" y="124" font-family="'Liberation Sans', sans-serif" font-size="15" fill="#1a1a1a" textLength="30.5" lengthAdjust="spacingAndGlyphs" xml:space="preserve" >Help</text>
<rect x="1334" y="87" width="12" height="1" fill="#000" />
<rect x="1392.5" y="82.5" width="11" height="11" fill="none" stroke="#000" stroke-width="1"/>
<path d="M1451 82 L1463 94 M1463 82 L1451 94" stroke="#000" stroke-width="1.1" fill="none"/>
<text x="998.3" y="155.5" font-family="'Liberation Sans', sans-serif" font-size="15" fill="#e6e6e6" textLength="114.2" lengthAdjust="spacingAndGlyphs" xml:space="preserve" >PACK VOLTAGE</text>
<text x="737" y="183" font-family="'Liberation Sans', sans-serif" font-size="15" fill="#f00000" textLength="89.2" lengthAdjust="spacingAndGlyphs" xml:space="preserve" >Pack Voltage</text>
<rect x="709" y="203.2" width="724" height="1" fill="#373737" />
<rect x="709" y="222.0" width="724" height="2" fill="#444444" />
<rect x="709" y="241.9" width="724" height="1" fill="#373737" />
<rect x="709" y="261.2" width="724" height="1" fill="#373737" />
<rect x="709" y="280.5" width="724" height="1" fill="#373737" />
<rect x="709" y="299.9" width="724" height="1" fill="#373737" />
<rect x="709" y="318.7" width="724" height="2" fill="#444444" />
<rect x="709" y="338.5" width="724" height="1" fill="#373737" />
<rect x="709" y="357.9" width="724" height="1" fill="#373737" />
<rect x="709" y="377.2" width="724" height="1" fill="#373737" />
<rect x="709" y="396.5" width="724" height="1" fill="#373737" />
<rect x="709" y="415.4" width="724" height="2" fill="#444444" />
<rect x="709" y="435.2" width="724" height="1" fill="#373737" />
<rect x="709" y="454.5" width="724" height="1" fill="#373737" />
<rect x="709" y="473.9" width="724" height="1" fill="#373737" />
<rect x="709" y="493.2" width="724" height="1" fill="#373737" />
<rect x="709" y="512.0" width="724" height="2" fill="#444444" />
<rect x="709" y="531.9" width="724" height="1" fill="#373737" />
<rect x="709" y="551.2" width="724" height="1" fill="#373737" />
<rect x="709" y="570.5" width="724" height="1" fill="#373737" />
<rect x="709" y="589.9" width="724" height="1" fill="#373737" />
<rect x="709" y="608.7" width="724" height="2" fill="#444444" />
<text x="644.3" y="229.3" font-family="'Liberation Sans', sans-serif" font-size="15" fill="#f0f0f0" textLength="46.4" lengthAdjust="spacingAndGlyphs" xml:space="preserve" >14.44V</text>
<text x="644.3" y="326.0" font-family="'Liberation Sans', sans-serif" font-size="15" fill="#f0f0f0" textLength="46.4" lengthAdjust="spacingAndGlyphs" xml:space="preserve" >14.14V</text>
<text x="644.3" y="422.7" font-family="'Liberation Sans', sans-serif" font-size="15" fill="#f0f0f0" textLength="46.4" lengthAdjust="spacingAndGlyphs" xml:space="preserve" >13.84V</text>
<text x="644.3" y="519.3" font-family="'Liberation Sans', sans-serif" font-size="15" fill="#f0f0f0" textLength="46.4" lengthAdjust="spacingAndGlyphs" xml:space="preserve" >13.54V</text>
<text x="644.3" y="616.0" font-family="'Liberation Sans', sans-serif" font-size="15" fill="#f0f0f0" textLength="46.4" lengthAdjust="spacingAndGlyphs" xml:space="preserve" >13.23V</text>
<rect x="709" y="628.2" width="724" height="1" fill="#4a4a4a" />
<rect x="709.5" y="625.5" width="1" height="7" fill="#7a7a7a" />
<text x="703.0" y="653.8" font-family="'Liberation Sans', sans-serif" font-size="15" fill="#f0f0f0" textLength="20.0" lengthAdjust="spacingAndGlyphs" xml:space="preserve" >0.0</text>
<rect x="789.8" y="625.5" width="1" height="7" fill="#7a7a7a" />
<text x="783.2" y="653.8" font-family="'Liberation Sans', sans-serif" font-size="15" fill="#f0f0f0" textLength="20.0" lengthAdjust="spacingAndGlyphs" xml:space="preserve" >2.3</text>
<rect x="870.0" y="625.5" width="1" height="7" fill="#7a7a7a" />
<text x="863.5" y="653.8" font-family="'Liberation Sans', sans-serif" font-size="15" fill="#f0f0f0" textLength="20.0" lengthAdjust="spacingAndGlyphs" xml:space="preserve" >4.7</text>
<rect x="950.2" y="625.5" width="1" height="7" fill="#7a7a7a" />
<text x="943.8" y="653.8" font-family="'Liberation Sans', sans-serif" font-size="15" fill="#f0f0f0" textLength="20.0" lengthAdjust="spacingAndGlyphs" xml:space="preserve" >7.0</text>
<rect x="1030.5" y="625.5" width="1" height="7" fill="#7a7a7a" />
<text x="1024.0" y="653.8" font-family="'Liberation Sans', sans-serif" font-size="15" fill="#f0f0f0" textLength="20.0" lengthAdjust="spacingAndGlyphs" xml:space="preserve" >9.3</text>
<rect x="1110.8" y="625.5" width="1" height="7" fill="#7a7a7a" />
<text x="1106.2" y="653.8" font-family="'Liberation Sans', sans-serif" font-size="15" fill="#f0f0f0" textLength="16.0" lengthAdjust="spacingAndGlyphs" xml:space="preserve" >12</text>
<rect x="1191.0" y="625.5" width="1" height="7" fill="#7a7a7a" />
<text x="1186.5" y="653.8" font-family="'Liberation Sans', sans-serif" font-size="15" fill="#f0f0f0" textLength="16.0" lengthAdjust="spacingAndGlyphs" xml:space="preserve" >14</text>
<rect x="1271.2" y="625.5" width="1" height="7" fill="#7a7a7a" />
<text x="1266.8" y="653.8" font-family="'Liberation Sans', sans-serif" font-size="15" fill="#f0f0f0" textLength="16.0" lengthAdjust="spacingAndGlyphs" xml:space="preserve" >16</text>
<rect x="1351.5" y="625.5" width="1" height="7" fill="#7a7a7a" />
<text x="1347.0" y="653.8" font-family="'Liberation Sans', sans-serif" font-size="15" fill="#f0f0f0" textLength="16.0" lengthAdjust="spacingAndGlyphs" xml:space="preserve" >19</text>
<rect x="1431.8" y="625.5" width="1" height="7" fill="#7a7a7a" />
<text x="1427.2" y="653.8" font-family="'Liberation Sans', sans-serif" font-size="15" fill="#f0f0f0" textLength="16.0" lengthAdjust="spacingAndGlyphs" xml:space="preserve" >21</text>
<rect x="709.5" y="627.2" width="4" height="2" fill="#f00000" />
<text x="1032.5" y="677.8" font-family="'Liberation Sans', sans-serif" font-size="15" fill="#f0f0f0" textLength="52.5" lengthAdjust="spacingAndGlyphs" xml:space="preserve" >Minutes</text>
<polyline points="715.3,259.5 728.6,332.3 734.8,332.6 741,359.5 749.6,378.8 763.4,430.6 769.7,431.2 780,463 790,489 803.6,520 810,520.5 820,539 835,554 844,559 849,559.2 858,563.6 865,569 875,573 884,573.2 888,575 894,575.5 898,579 904,579.5 910,582.6 920,583 922,584.4 929,584.6 933,586.5 948.8,586.7 952,588.9 968.4,588.9 970.6,590.6 978.3,590.6 982.7,593.2 1013.3,593.2 1015.5,594.3 1022,595.3 1025.3,596.5 1083.3,596.5 1085.5,597.8 1098.6,597.8 1100.8,599.4 1104,599.4 1105.2,600.2 1223.3,600.2 1225.5,601.6 1258.3,601.6 1260.5,602.9 1268,602.9 1270.8,604.4 1429.5,604.4" fill="none" stroke="#f80000" stroke-width="2.8" stroke-linejoin="round"/>
<text x="696.8" y="722.5" font-family="'Liberation Sans', sans-serif" font-size="15" fill="#f0f0f0" textLength="92.0" lengthAdjust="spacingAndGlyphs" xml:space="preserve" >Preset Name:</text>
<text x="700" y="747.5" font-family="'Liberation Sans', sans-serif" font-size="15" fill="#f0f0f0" textLength="88.8" lengthAdjust="spacingAndGlyphs" xml:space="preserve" >Time Started:</text>
<text x="801.3" y="722.5" font-family="'Liberation Sans', sans-serif" font-size="15" fill="#f0f0f0" textLength="373.7" lengthAdjust="spacingAndGlyphs" xml:space="preserve" >Lead Odyssey PARALLEL 12V   SB50  Set20.0A     1Cy</text>
<text x="800" y="747.5" font-family="'Liberation Sans', sans-serif" font-size="15" fill="#f0f0f0" textLength="137.5" lengthAdjust="spacingAndGlyphs" xml:space="preserve" >01:49:42  20-Jan-19</text>
<text x="1368.8" y="722.5" font-family="'Liberation Sans', sans-serif" font-size="15" fill="#f0f0f0" textLength="97.5" lengthAdjust="spacingAndGlyphs" xml:space="preserve" >PowerLab 8v2</text>
<text x="1348.8" y="747.5" font-family="'Liberation Sans', sans-serif" font-size="15" fill="#f0f0f0" textLength="117.5" lengthAdjust="spacingAndGlyphs" xml:space="preserve" >Firmware:   V3.33</text>
<rect x="651" y="772.5" width="385" height="60" fill="#fafafa" stroke="#1a7fd4" stroke-width="1.4"/>
<rect x="1015" y="774" width="20" height="57" fill="#f0f0f0" />
<path d="M1020.5 788 L1024.5 784 L1028.5 788 M1020.5 818 L1024.5 822 L1028.5 818" fill="none" stroke="#b4b4b4" stroke-width="1.4"/>
<rect x="654.3" y="775" width="1" height="16" fill="#000" />
<text x="655" y="789.3" font-family="'Liberation Sans', sans-serif" font-size="15.4" fill="#333" textLength="100.5" lengthAdjust="spacingAndGlyphs" xml:space="preserve" >Enter Notes Here</text>
<rect x="1355.6" y="774" width="112.6" height="56.7" fill="#f8f8f8" />
<rect x="1388.2" y="775.1" width="48.1" height="30" rx="2.2" fill="#c01a12"/>
<rect x="1389" y="775.8" width="46" height="27.8" rx="1.8" fill="#e62a20"/>
<text x="1393.5" y="790.3" font-family="'Liberation Serif', serif" font-size="13.5" fill="#1a0a08" font-weight="bold" textLength="39.5" lengthAdjust="spacingAndGlyphs" xml:space="preserve" >FMA</text>
<text x="1392.8" y="789.8" font-family="'Liberation Serif', serif" font-size="13.5" fill="#fdfdfd" font-weight="bold" textLength="39.4" lengthAdjust="spacingAndGlyphs" xml:space="preserve" >FMA</text>
<text x="1393" y="801.6" font-family="'Liberation Serif', serif" font-size="11.5" fill="#fdfdfd" font-weight="bold" textLength="39" lengthAdjust="spacingAndGlyphs" xml:space="preserve" >Direct</text>
<text x="1356" y="826.1" font-family="'Liberation Sans', sans-serif" font-size="10.5" fill="#1e1e1e" font-weight="bold" textLength="28.6" lengthAdjust="spacingAndGlyphs" xml:space="preserve" stroke="#1e1e1e" stroke-width="0.5">REV</text>
<text x="1403.5" y="826.1" font-family="'Liberation Sans', sans-serif" font-size="10.5" fill="#1e1e1e" font-weight="bold" textLength="60.0" lengthAdjust="spacingAndGlyphs" xml:space="preserve" stroke="#1e1e1e" stroke-width="0.5">LECTRIX</text>
<circle cx="1393.8" cy="820.9" r="8.3" fill="#e03a2e"/>
<path d="M1388.5 814.5 L1402.5 820.9 L1388.5 827.3 L1391.5 820.9 Z" fill="#f8f8f8"/>
<path d="M1393.8 812.6 L1395 817.5 M1393.8 829.2 L1395 824.3" stroke="#f8f8f8" stroke-width="1.2"/>
</svg>
</div>
<div id="taskbar" style="position:absolute;left:0;top:897px;width:1600px;height:3px;background:#0d0f0d"></div>
</div></body></html>
